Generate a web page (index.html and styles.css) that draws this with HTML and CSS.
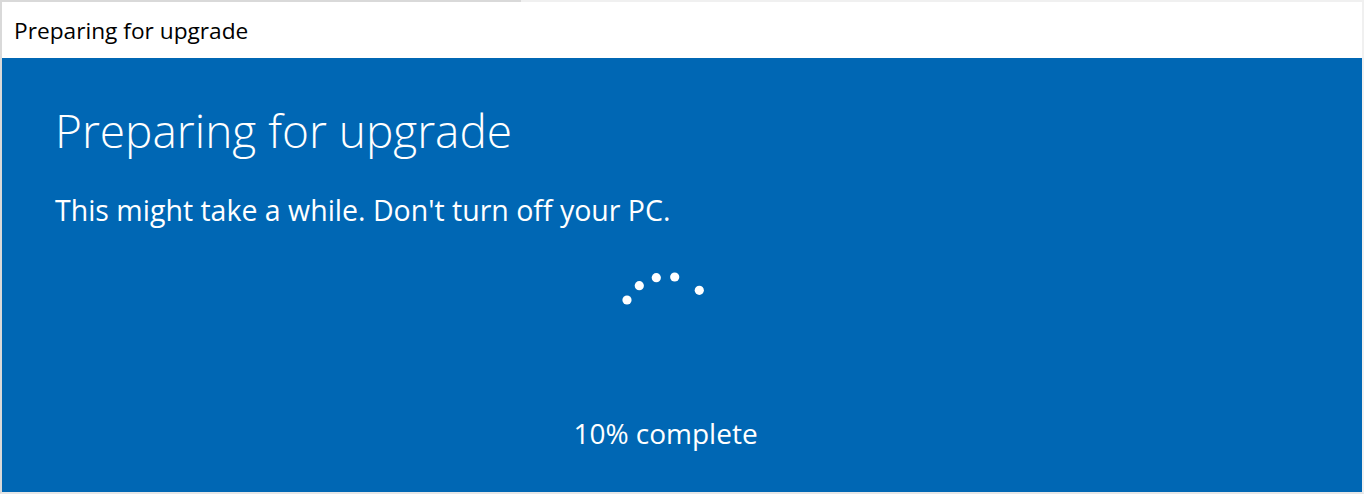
FILE: index.html
```html
<!DOCTYPE html>
<html lang="en">
<head>
<meta charset="utf-8">
<title>Preparing for upgrade</title>
<link rel="stylesheet" href="styles.css">
</head>
<body>
<div class="window">
  <div class="titlebar"><span class="title-text">Preparing for upgrade</span></div>
  <main class="content">
    <h1 class="heading">Preparing for upgrade</h1>
    <p class="subtitle">This might take a while. Don't turn off your PC.</p>
    <div class="spinner-row">
      <svg class="spinner" width="100" height="40" viewBox="0 0 100 40" aria-hidden="true">
        <circle cx="16" cy="33" r="4.6" fill="#fff"/>
        <circle cx="28.3" cy="18.7" r="4.6" fill="#fff"/>
        <circle cx="45.3" cy="10.7" r="4.6" fill="#fff"/>
        <circle cx="63.7" cy="10" r="4.6" fill="#fff"/>
        <circle cx="88.3" cy="23.3" r="4.6" fill="#fff"/>
      </svg>
    </div>
    <p class="progress">10% complete</p>
  </main>
</div>
</body>
</html>
```
FILE: styles.css
```css
html, body {
  margin: 0;
  padding: 0;
  background: #f0f0f0;
}
.window {
  width: 1364px;
  height: 494px;
  box-sizing: border-box;
  border-top: 2px solid #f0f0f0;
  border-right: 2px solid #f0f0f0;
  border-bottom: 2px solid #e6e6e6;
  border-left: 2px solid #d9d9d9;
  display: flex;
  flex-direction: column;
  font-family: "Open Sans", "Noto Sans", sans-serif;
  position: relative;
}
.window::before {
  content: "";
  position: absolute;
  top: -2px;
  left: -2px;
  width: 521px;
  height: 2px;
  background: #d9d9d9;
}
.titlebar {
  height: 56px;
  background: #fff;
  display: flex;
  align-items: center;
  padding-left: 12px;
  flex: none;
}
.title-text {
  font-size: 22.7px;
  color: #000;
  line-height: 1;
  margin-top: 2px;
}
.content {
  flex: 1;
  background: #0067b4;
  color: #fff;
  padding: 0 86px 0 53px;
  display: flex;
  flex-direction: column;
}
.heading {
  margin: 42px 0 0;
  font-size: 46px;
  font-weight: 300;
  line-height: 60px;
}
.subtitle {
  margin: 33px 0 0;
  font-size: 28.5px;
  font-weight: 400;
  line-height: 34px;
}
.spinner-row {
  margin-top: 40px;
  display: flex;
  justify-content: center;
}
.spinner {
  display: block;
  margin-left: -10px;
}
.progress {
  margin: 109px 0 0;
  text-align: center;
  font-size: 28px;
  line-height: 34px;
}
```
